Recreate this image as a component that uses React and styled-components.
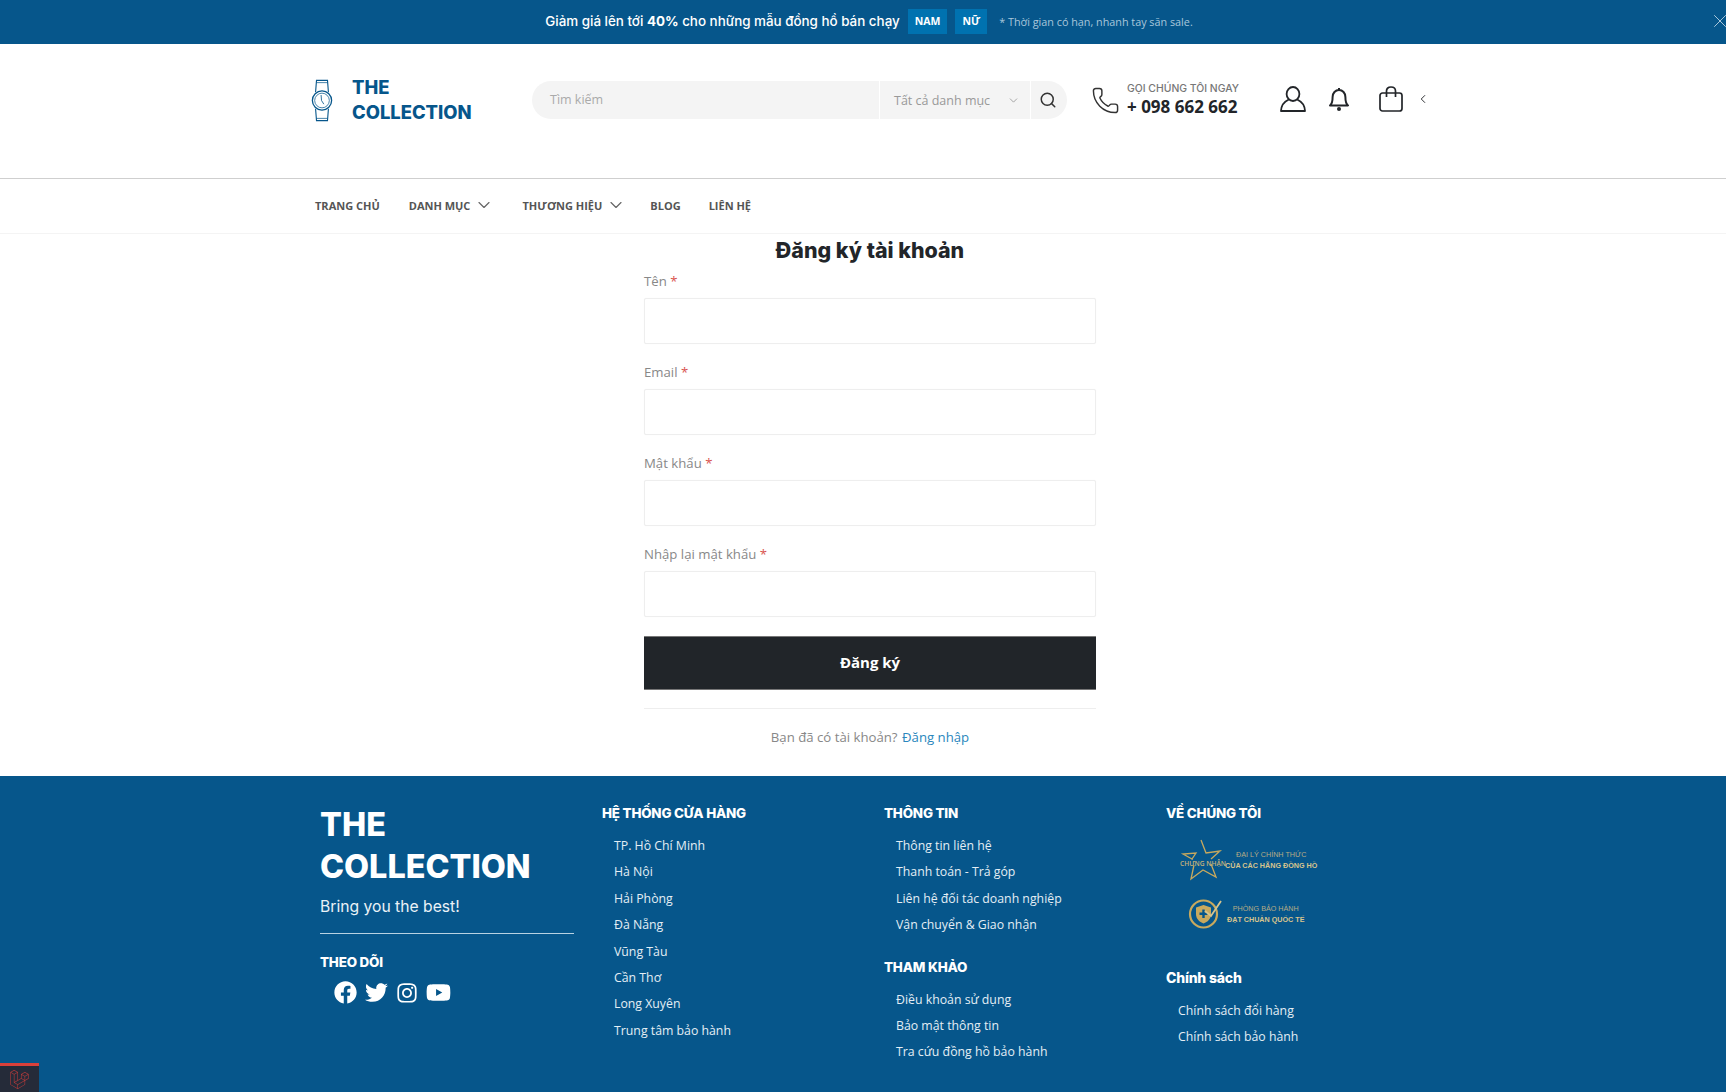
import React from 'react'
import styled, { createGlobalStyle } from 'styled-components'
import { Search, ChevronDown, ChevronLeft, X, Phone } from 'lucide-react'
import { FaFacebook, FaTwitter, FaInstagram, FaYoutube, FaLaravel } from 'react-icons/fa'

const GlobalStyle = createGlobalStyle`
  html, body {
    margin: 0;
    padding: 0;
    height: 1092px;
    overflow: hidden;
    background: #fff;
    font-family: "Open Sans", "Liberation Sans", sans-serif;
    font-size: 14px;
    color: #777;
  }
  * { box-sizing: border-box; }
`

const blue = '#06568b'
const display = 'Inter, "Open Sans", sans-serif'

const Container = styled.div`
  width: 1140px;
  margin: 0 auto;
`

/* top promo strip */
const TopBar = styled.div`
  position: relative;
  height: 44px;
  background: ${blue};
  display: flex;
  align-items: center;
  justify-content: center;
  padding: 0 0 2px 12px;
  gap: 8px;
  color: #fff;
`
const PromoText = styled.span`
  font-family: ${display};
  font-size: 13.4px;
  font-weight: 500;
  b { font-weight: 700; }
`
const PromoButton = styled.a`
  height: 25px;
  display: flex;
  align-items: center;
  padding: 0 ${p => p.$pad}px;
  background: #0072b0;
  font-size: 10.5px;
  font-weight: 700;
`
const PromoNote = styled.span`
  font-size: 10.8px;
  color: #a9c7db;
  margin-left: 4px;
`
const CloseButton = styled.span`
  position: absolute;
  right: -5px;
  top: 10px;
  color: #b9d2e2;
  display: flex;
`

/* header */
const Header = styled.header`
  height: 135px;
  border-bottom: 1px solid #cfcfcf;
  padding-top: 26px;
`
const HeaderRow = styled.div`
  height: 60px;
  display: flex;
  align-items: center;
  padding-left: 18px;
`
const Logo = styled.a`
  width: 221px;
  display: flex;
  align-items: center;
  gap: 19px;
`
const LogoText = styled.div`
  font-family: ${display};
  font-size: 18.4px;
  font-weight: 800;
  line-height: 25px;
  color: ${blue};
`
const SearchBox = styled.form`
  width: 535px;
  height: 38px;
  display: flex;
  background: #f4f4f4;
  border-radius: 19px;
  overflow: hidden;
`
const SearchInput = styled.div`
  width: 347px;
  padding-left: 18px;
  line-height: 38px;
  font-size: 12.5px;
  color: #aaa;
`
const CategorySelect = styled.div`
  width: 151px;
  border-left: 1px solid #fff;
  padding: 0 10px 0 14px;
  display: flex;
  align-items: center;
  justify-content: space-between;
  font-size: 12.5px;
  color: #999;
`
const SearchButton = styled.button`
  flex: 1;
  border: 0;
  border-left: 1px solid #fff;
  background: transparent;
  padding: 0 3px 0 0;
  display: flex;
  align-items: center;
  justify-content: center;
  color: #333;
`
const PhoneBlock = styled.div`
  margin-left: 24px;
  display: flex;
  align-items: center;
  gap: 7px;
  color: #333;
`
const PhoneLabel = styled.div`
  font-family: ${display};
  font-size: 10.4px;
  font-weight: 500;
  line-height: 14px;
  color: #777;
`
const PhoneNumber = styled.div`
  font-size: 17px;
  font-weight: 700;
  line-height: 22px;
  color: #222529;
`
const HeaderIcon = styled.a`
  display: flex;
  margin: -2px 0 0 ${p => p.$left}px;
  color: #222529;
`

/* nav */
const NavBar = styled.nav`
  height: 55px;
  border-bottom: 1px solid #f4f4f4;
`
const NavRow = styled.ul`
  list-style: none;
  margin: 0;
  padding: 0 0 0 22px;
  height: 52px;
  display: flex;
  align-items: center;
`
const NavItem = styled.li`
  display: flex;
  align-items: center;
  gap: 4px;
  margin-right: ${p => p.$right}px;
  font-size: 11px;
  font-weight: 700;
  color: #555;
`
const NavChevron = styled(ChevronDown)`
  margin-right: -3px;
  color: #666;
`

/* form */
const Main = styled.main`
  width: 452px;
  margin-left: 644px;
  height: 542px;
`
const Title = styled.h1`
  margin: 0 0 5px;
  height: 32px;
  line-height: 32px;
  text-align: center;
  font-family: ${display};
  font-size: 21.4px;
  font-weight: 800;
  color: #222529;
`
const Field = styled.div`
  margin-bottom: 18px;
`
const Label = styled.label`
  display: block;
  height: 22px;
  line-height: 21px;
  margin-bottom: 5px;
  font-size: 13.2px;
  color: #888;
  span { color: #d9534f; }
`
const Input = styled.input`
  display: block;
  width: 100%;
  height: 46px;
  background: #fff;
  border: 1px solid #eee;
  border-radius: 2px;
  box-shadow: 0 0 1px rgba(0, 0, 0, 0.06);
`
const SubmitButton = styled.button`
  display: block;
  width: 100%;
  height: 54px;
  margin-top: 19px;
  padding: 0 0 3px;
  border: 0;
  border-top: 1px solid #777;
  border-bottom: 1px solid #777;
  background: #212529;
  font-family: inherit;
  font-size: 15px;
  font-weight: 700;
  color: #fff;
`
const Rule = styled.hr`
  margin: 18px 0 17px;
  height: 1px;
  border: 0;
  background: #eee;
`
const LoginLine = styled.p`
  margin: 0;
  line-height: 22px;
  text-align: center;
  font-size: 13.2px;
  color: #888;
  a { color: #2a87bd; margin-left: 1px; }
`

/* footer */
const Footer = styled.footer`
  height: 316px;
  background: ${blue};
  padding-top: 26px;
  color: #eaf2f7;
`
const FooterGrid = styled.div`
  display: grid;
  grid-template-columns: repeat(4, 282px);
  padding-left: 27px;
`
const BrandName = styled.div`
  margin-top: 2px;
  font-family: ${display};
  font-size: 32.4px;
  font-weight: 800;
  line-height: 42px;
  color: #fff;
`
const Slogan = styled.div`
  margin-top: 8px;
  font-family: ${display};
  font-size: 15.7px;
  font-weight: 400;
  line-height: 22px;
`
const BrandRule = styled.div`
  width: 254px;
  height: 1px;
  margin: 15px 0 17px;
  background: #b9d2e2;
`
const ColHeading = styled.h4`
  margin: ${p => p.$top || 0}px 0 9px;
  height: 22px;
  line-height: 22px;
  font-family: ${display};
  font-size: ${p => p.$size || 13.4}px;
  font-weight: 800;
  letter-spacing: -0.2px;
  color: #fff;
`
const FollowHeading = styled(ColHeading)`
  margin-bottom: 7px;
`
const SocialRow = styled.div`
  display: flex;
  align-items: center;
  gap: 8px;
  padding-left: 14px;
  color: #fff;
`
const FooterList = styled.ul`
  list-style: none;
  margin: 0;
  padding: 0 0 0 12px;
`
const FooterItem = styled.li`
  height: 26.4px;
  line-height: 26.4px;
  font-size: 12.3px;
  color: #e4eef5;
`
const CertRow = styled.div`
  display: flex;
  align-items: center;
  gap: ${p => p.$gap}px;
  height: ${p => p.$height}px;
  margin: ${p => p.$top}px 0 0 ${p => p.$left}px;
`
const CertMark = styled.div`
  position: relative;
  display: flex;
`
const CertStamp = styled.span`
  position: absolute;
  left: 0;
  top: 20px;
  font-size: 6.6px;
  font-weight: 600;
  white-space: nowrap;
  color: #c8b27a;
`
const CertText = styled.div`
  font-family: "Liberation Sans", sans-serif;
  font-size: 7.2px;
  line-height: 11px;
  text-align: center;
  white-space: nowrap;
  color: #b6ac86;
  strong { color: #d6c48e; font-weight: 700; }
`
const DebugBadge = styled.div`
  position: absolute;
  left: 0;
  bottom: 0;
  width: 39px;
  height: 29px;
  border-top: 3px solid #d9403a;
  background: #252b39;
  color: #b23a3a;
  display: flex;
  align-items: center;
  justify-content: center;
`

const WatchIcon = () => (
  <svg width="22" height="45" viewBox="0 0 24 46" fill="none" stroke={blue} strokeWidth="1.2">
    <path d="M5 14 L6 1 H18 L19 14" />
    <path d="M5 32 L6 45 H18 L19 32" />
    <path d="M6 3.5 H18 M6 42.5 H18" strokeWidth="0.8" />
    <circle cx="12" cy="23" r="10.5" strokeWidth="1.4" />
    <circle cx="12" cy="23" r="8" strokeWidth="0.8" />
    <path d="M11 17 L11.5 23 L14 27" strokeWidth="0.9" />
  </svg>
)

const UserIcon = () => (
  <svg width="26" height="26" viewBox="0 0 26 26" fill="none" stroke="currentColor" strokeWidth="1.8">
    <ellipse cx="13" cy="8" rx="6.4" ry="7" />
    <path d="M8.8 13.5 C4.5 15.5 1.2 19.5 1 25 H25 C24.8 19.5 21.5 15.5 17.2 13.5" strokeLinejoin="round" />
  </svg>
)

const BellIcon = () => (
  <svg width="20" height="24" viewBox="0 0 20 24" fill="none" stroke="currentColor" strokeWidth="2">
    <path d="M10 1 V3" />
    <path d="M1 18.5 C3.5 16.5 3.6 14 3.6 10 C3.6 6 6.4 3 10 3 C13.6 3 16.4 6 16.4 10 C16.4 14 16.5 16.5 19 18.5 Z" strokeLinejoin="round" />
    <circle cx="10" cy="22" r="2" fill="currentColor" stroke="none" />
  </svg>
)

const BagIcon = () => (
  <svg width="24" height="26" viewBox="0 0 24 26" fill="none" stroke="currentColor" strokeWidth="1.7">
    <rect x="1" y="7" width="22" height="18" rx="2.5" />
    <path d="M7.5 11 V5 C7.5 2.5 9.5 1 12 1 C14.5 1 16.5 2.5 16.5 5 V11" />
  </svg>
)

const StarBadge = () => (
  <svg width="44" height="42" viewBox="0 0 44 42" fill="none" stroke="#c8a95e" strokeWidth="1.3">
    <path d="M21 1 L26 14 L40 12 L31 20 M12 20 L3 15 L16 14 Z" />
    <path d="M31 25 L36 38 L23 31 L11 40 L14 26" />
  </svg>
)

const ShieldBadge = () => (
  <svg width="34" height="31" viewBox="0 0 34 31" fill="none">
    <circle cx="15.5" cy="16" r="13.5" stroke="#c8a95e" strokeWidth="2.2" />
    <path d="M15.5 7 L23 9.5 V16 C23 21 19.5 24 15.5 25.5 C11.5 24 8 21 8 16 V9.5 Z" fill="#c8a95e" />
    <path d="M15.5 11.5 V20 M11.5 15.7 H19.5" stroke={blue} strokeWidth="2.4" />
    <path d="M17 13 L23 18 L33 3" stroke="#d6c48e" strokeWidth="1.8" />
  </svg>
)

const fields = ['Tên', 'Email', 'Mật khẩu', 'Nhập lại mật khẩu']
const stores = ['TP. Hồ Chí Minh', 'Hà Nội', 'Hải Phòng', 'Đà Nẵng', 'Vũng Tàu', 'Cần Thơ', 'Long Xuyên', 'Trung tâm bảo hành']
const infos = ['Thông tin liên hệ', 'Thanh toán - Trả góp', 'Liên hệ đối tác doanh nghiệp', 'Vận chuyển & Giao nhận']
const refs = ['Điều khoản sử dụng', 'Bảo mật thông tin', 'Tra cứu đồng hồ bảo hành']
const policies = ['Chính sách đổi hàng', 'Chính sách bảo hành']

const LinkList = ({ items }) => (
  <FooterList>
    {items.map(item => <FooterItem key={item}>{item}</FooterItem>)}
  </FooterList>
)

const App = () => {
  return (
    <>
      <GlobalStyle />
      <TopBar>
        <PromoText>Giảm giá lên tới <b>40%</b> cho những mẫu đồng hồ bán chạy</PromoText>
        <PromoButton $pad={7}>NAM</PromoButton>
        <PromoButton $pad={7}>NỮ</PromoButton>
        <PromoNote>* Thời gian có hạn, nhanh tay săn sale.</PromoNote>
        <CloseButton><X size={22} strokeWidth={1} /></CloseButton>
      </TopBar>

      <Header>
        <Container>
          <HeaderRow>
            <Logo>
              <WatchIcon />
              <LogoText>THE<br />COLLECTION</LogoText>
            </Logo>
            <SearchBox>
              <SearchInput>Tìm kiếm</SearchInput>
              <CategorySelect>
                Tất cả danh mục
                <ChevronDown size={13} strokeWidth={1.6} />
              </CategorySelect>
              <SearchButton><Search size={18} strokeWidth={2} /></SearchButton>
            </SearchBox>
            <PhoneBlock>
              <Phone size={29} strokeWidth={1.2} />
              <div>
                <PhoneLabel>GỌI CHÚNG TÔI NGAY</PhoneLabel>
                <PhoneNumber>+ 098 662 662</PhoneNumber>
              </div>
            </PhoneBlock>
            <HeaderIcon $left={41}><UserIcon /></HeaderIcon>
            <HeaderIcon $left={23}><BellIcon /></HeaderIcon>
            <HeaderIcon $left={30}><BagIcon /></HeaderIcon>
            <HeaderIcon $left={13}><ChevronLeft size={14} strokeWidth={1.6} /></HeaderIcon>
          </HeaderRow>
        </Container>
      </Header>

      <NavBar>
        <Container>
          <NavRow>
            <NavItem $right={29}>TRANG CHỦ</NavItem>
            <NavItem $right={31}>DANH MỤC <NavChevron size={20} strokeWidth={1.4} /></NavItem>
            <NavItem $right={27}>THƯƠNG HIỆU <NavChevron size={20} strokeWidth={1.4} /></NavItem>
            <NavItem $right={28}>BLOG</NavItem>
            <NavItem>LIÊN HỆ</NavItem>
          </NavRow>
        </Container>
      </NavBar>

      <Main>
        <Title>Đăng ký tài khoản</Title>
        {fields.map(name => (
          <Field key={name}>
            <Label>{name} <span>*</span></Label>
            <Input type="text" />
          </Field>
        ))}
        <SubmitButton>Đăng ký</SubmitButton>
        <Rule />
        <LoginLine>Bạn đã có tài khoản? <a>Đăng nhập</a></LoginLine>
      </Main>

      <Footer>
        <Container>
          <FooterGrid>
            <div>
              <BrandName>THE<br />COLLECTION</BrandName>
              <Slogan>Bring you the best!</Slogan>
              <BrandRule />
              <FollowHeading>THEO DÕI</FollowHeading>
              <SocialRow>
                <FaFacebook size={23} />
                <FaTwitter size={23} />
                <FaInstagram size={22} />
                <FaYoutube size={25} />
              </SocialRow>
            </div>
            <div>
              <ColHeading>HỆ THỐNG CỬA HÀNG</ColHeading>
              <LinkList items={stores} />
            </div>
            <div>
              <ColHeading>THÔNG TIN</ColHeading>
              <LinkList items={infos} />
              <ColHeading $top={17}>THAM KHẢO</ColHeading>
              <LinkList items={refs} />
            </div>
            <div>
              <ColHeading>VỀ CHÚNG TÔI</ColHeading>
              <CertRow $gap={1} $height={42} $top={15} $left={14}>
                <CertMark>
                  <StarBadge />
                  <CertStamp>CHỨNG NHẬN</CertStamp>
                </CertMark>
                <CertText>ĐẠI LÝ CHÍNH THỨC<br /><strong>CỦA CÁC HÃNG ĐỒNG HỒ</strong></CertText>
              </CertRow>
              <CertRow $gap={5} $height={31} $top={17} $left={22}>
                <ShieldBadge />
                <CertText>PHÒNG BẢO HÀNH<br /><strong>ĐẠT CHUẨN QUỐC TẾ</strong></CertText>
              </CertRow>
              <ColHeading $top={38} $size={14}>Chính sách</ColHeading>
              <LinkList items={policies} />
            </div>
          </FooterGrid>
        </Container>
      </Footer>

      <DebugBadge><FaLaravel size={19} /></DebugBadge>
    </>
  )
}

export default App
